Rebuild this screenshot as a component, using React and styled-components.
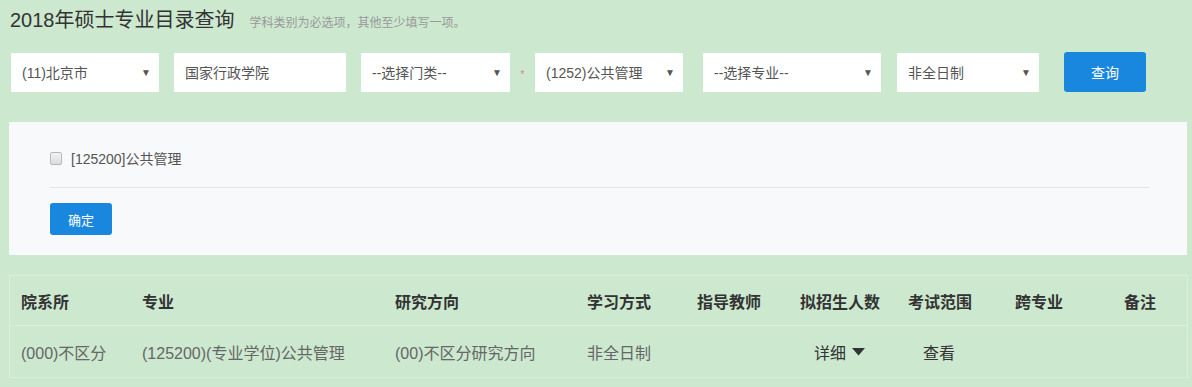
import React from 'react'
import styled, { createGlobalStyle } from 'styled-components';

const GlobalStyle = createGlobalStyle`
    body {
        margin : 0;
        background-color : #cce8cf;
        font-family : "Liberation Sans", "Noto Sans CJK SC", sans-serif;
    }
`;

const filters = [
    { kind : 'select', text : '(11)北京市', width : 148, gap : 0 },
    { kind : 'input', text : '国家行政学院', width : 172, gap : 15 },
    { kind : 'select', text : '--选择门类--', width : 149, gap : 15 },
    { kind : 'select', text : '(1252)公共管理', width : 148, gap : 0, required : true },
    { kind : 'select', text : '--选择专业--', width : 178, gap : 20 },
    { kind : 'select', text : '非全日制', width : 142, gap : 16 },
];

const columns = [
    { title : '院系所', width : '121px' },
    { title : '专业', width : '253px' },
    { title : '研究方向', width : '192px' },
    { title : '学习方式', width : '110px' },
    { title : '指导教师', width : '103px' },
    { title : '拟招生人数', width : '108px' },
    { title : '考试范围', width : '107px' },
    { title : '跨专业', width : '109px' },
    { title : '备注', width : '1fr' },
];

const App = () => {
  return (
      <Page>
          <GlobalStyle />
          <Header>
              <Title>2018年硕士专业目录查询</Title>
              <Hint>学科类别为必选项，其他至少填写一项。</Hint>
          </Header>

          <Filters>
              {filters.map((f) => (
                  <React.Fragment key={f.text}>
                      {f.required && <Star>*</Star>}
                      <Field $width={f.width} $gap={f.gap}>
                          <span>{f.text}</span>
                          {f.kind === 'select' && <Arrow>▼</Arrow>}
                      </Field>
                  </React.Fragment>
              ))}
              <SearchButton>查询</SearchButton>
          </Filters>

          <Panel>
              <CheckRow>
                  <Check type="checkbox" />
                  <span>[125200]公共管理</span>
              </CheckRow>
              <Divider />
              <SmallButton>确定</SmallButton>
          </Panel>

          <Table $cols={columns.map((c) => c.width).join(' ')}>
              {columns.map((c) => (
                  <HeadCell key={c.title}>{c.title}</HeadCell>
              ))}
              <Cell>(000)不区分</Cell>
              <Cell>(125200)(专业学位)公共管理</Cell>
              <Cell>(00)不区分研究方向</Cell>
              <Cell>非全日制</Cell>
              <Cell></Cell>
              <Cell $dark $pad={25}>
                  详细
                  <svg width="13" height="8" viewBox="0 0 13 8">
                      <path d="M0 0 H13 L6.5 7.5 Z" fill="#333" />
                  </svg>
              </Cell>
              <Cell $dark $pad={26}>查看</Cell>
              <Cell></Cell>
              <Cell></Cell>
          </Table>
      </Page>
  )
}

const Page = styled.div`
    padding : 0 4px 0 9px;
    height : 387px;
    box-sizing : border-box;
    overflow : hidden;
`;

const Header = styled.div`
    display : flex;
    align-items : baseline;
    gap : 15px;
    padding : 7px 0 0 1px;
    height : 45px;
    box-sizing : border-box;
`;

const Title = styled.h1`
    margin : 0;
    font-size : 20px;
    font-weight : normal;
    color : #333;
    line-height : 26px;
`;

const Hint = styled.span`
    font-size : 12px;
    color : #999;
`;

const Filters = styled.div`
    display : flex;
    align-items : center;
    height : 40px;
    margin-top : 7px;
    padding-left : 2px;
`;

const Field = styled.div`
    display : flex;
    align-items : center;
    justify-content : space-between;
    box-sizing : border-box;
    width : ${(p) => p.$width}px;
    height : 39px;
    margin-left : ${(p) => p.$gap}px;
    padding : 0 8px 0 11px;
    background-color : #fff;
    font-size : 14px;
    color : #555;
`;

const Arrow = styled.span`
    font-size : 10px;
    color : #555;
`;

const Star = styled.span`
    width : 25px;
    text-align : center;
    padding-top : 4px;
    color : #d9534f;
    font-size : 11px;
    opacity : 0.6;
`;

const SearchButton = styled.button`
    margin-left : 25px;
    width : 82px;
    height : 40px;
    border : none;
    border-radius : 3px;
    background-color : #1a87de;
    color : #fff;
    font-family : inherit;
    font-size : 14px;
`;

const Panel = styled.div`
    margin-top : 30px;
    width : 1178px;
    height : 133px;
    box-sizing : border-box;
    padding : 26px 38px 0 41px;
    background-color : #f7f9fa;
`;

const CheckRow = styled.label`
    display : flex;
    align-items : center;
    gap : 9px;
    height : 20px;
    font-size : 14px;
    color : #555;
`;

const Check = styled.input`
    appearance : none;
    margin : 0;
    width : 12px;
    height : 13px;
    border : 1px solid #b8b8b8;
    border-radius : 2px;
    background : linear-gradient(#f2f2f2, #dcdcdc);
`;

const Divider = styled.div`
    height : 1px;
    margin : 19px 0 15px;
    background-color : #e3e5e6;
`;

const SmallButton = styled.button`
    width : 62px;
    height : 32px;
    border : none;
    border-radius : 3px;
    background-color : #1a87de;
    color : #fff;
    font-family : inherit;
    font-size : 13px;
`;

const Table = styled.div`
    display : grid;
    grid-template-columns : ${(p) => p.$cols};
    grid-template-rows : 50px 51px;
    margin-top : 20px;
    width : 1179px;
    border : 1px solid #dbefdd;
    box-sizing : border-box;
`;

const HeadCell = styled.div`
    display : flex;
    align-items : center;
    padding-left : 11px;
    border-bottom : 1px solid #dbefdd;
    font-size : 16px;
    font-weight : bold;
    color : #333;
`;

const Cell = styled.div`
    display : flex;
    align-items : center;
    gap : 6px;
    padding-left : ${(p) => p.$pad || 11}px;
    font-size : 16px;
    color : ${(p) => (p.$dark ? '#333' : '#666')};
`;

export default App
